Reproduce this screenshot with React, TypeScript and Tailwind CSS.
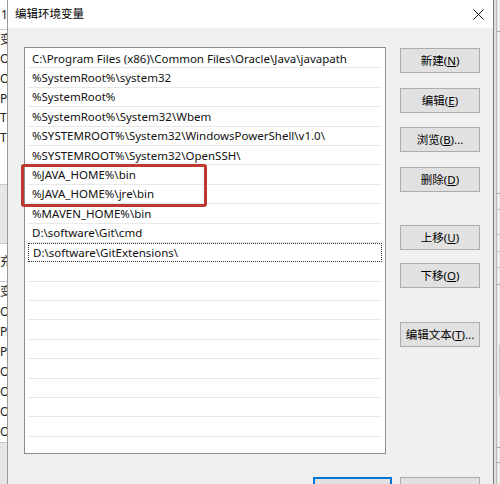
import React from 'react';

const paths = [
  'C:\\Program Files (x86)\\Common Files\\Oracle\\Java\\javapath',
  '%SystemRoot%\\system32',
  '%SystemRoot%',
  '%SystemRoot%\\System32\\Wbem',
  '%SYSTEMROOT%\\System32\\WindowsPowerShell\\v1.0\\',
  '%SYSTEMROOT%\\System32\\OpenSSH\\',
  '%JAVA_HOME%\\bin',
  '%JAVA_HOME%\\jre\\bin',
  '%MAVEN_HOME%\\bin',
  'D:\\software\\Git\\cmd',
  'D:\\software\\GitExtensions\\',
];

const font = { fontFamily: '"Segoe UI", "Noto Sans", "Noto Sans CJK SC", sans-serif' };

const WinButton = ({ label, hotkey, suffix, className = '' }: { label: string; hotkey: string; suffix?: string; className?: string }) => (
  <div className={`h-[25px] w-[80px] flex items-center justify-center bg-[#e1e1e1] border border-[#adadad] text-[11.5px] text-black ${className}`}>
    <span>
      {label}(<span className="underline">{hotkey}</span>){suffix}
    </span>
  </div>
);

// bits of the window behind the dialog
const LeftStrip = () => (
  <div className="w-[8px] h-full shrink-0 overflow-hidden bg-white border-r border-[#9a9a9a] text-[12px] text-[#222] leading-none">
    <div className="h-[30px] flex items-center border-b border-[#c8c8c8] pl-[1px]">1</div>
    <div className="flex flex-col">
      {['变', 'O', 'O', 'Pa', 'TE', 'TN'].map((t, i) => (
        <div key={i} className="h-[19.6px] flex items-center">{t}</div>
      ))}
    </div>
    <div className="h-[36px]" />
    <div className="h-[60px] bg-[#e6e6e6] border-y border-[#c8c8c8]" />
    <div className="h-[38px] flex items-center border-b border-[#c8c8c8]">充</div>
    {['变', 'O', 'Pa', 'PA', 'OF', 'OF', 'OF', 'OF'].map((t, i) => (
      <div key={i} className="h-[20px] flex items-center">{t}</div>
    ))}
    <div className="h-full bg-[#e6e6e6] border-t border-[#c8c8c8]" />
  </div>
);

const RightStrip = () => (
  <div className="w-[7px] h-full shrink-0 bg-[#ececec] border-l border-[#7a7a7a] flex">
    <div className="w-[2px] h-full bg-[#e0e0e0]" />
    <div className="flex-1 flex flex-col border-l border-[#b8b8b8]">
      <div className="h-[32px] shrink-0 border-b border-[#a8a8a8]" />
      <div className="h-[162px] shrink-0 border-b border-[#a8a8a8]" />
      <div className="h-[16px] shrink-0 border-b border-[#c0c0c0]" />
      <div className="h-[25px] shrink-0 border-b border-[#c0c0c0]" />
      <div className="h-[17px] shrink-0 border-b border-[#c0c0c0]" />
      <div className="h-[16px] shrink-0 border-b border-[#c0c0c0]" />
      <div className="h-[17px] shrink-0 border-b border-[#a8a8a8]" />
      <div className="h-[60px] shrink-0" />
      <div className="h-[50px] shrink-0 ml-[2px] bg-[#c6c6c6]" />
      <div className="h-[53px] shrink-0 border-b border-[#a8a8a8]" />
      <div className="h-[15px] shrink-0 border-b border-[#a8a8a8]" />
    </div>
  </div>
);

export default function App() {
  const rows = Array.from({ length: 21 }, (_, i) => paths[i] ?? '');
  return (
    <div className="w-[500px] h-[484px] flex overflow-hidden bg-[#f0f0f0]" style={font}>
      <LeftStrip />
      <div className="w-[485px] h-full flex flex-col shrink-0 overflow-hidden">
        <div className="h-[28px] shrink-0 bg-white flex items-center justify-between pl-[7px] pr-[9px] text-[11.5px] text-black">
          <span>编辑环境变量</span>
          <svg width="11" height="11" viewBox="0 0 11 11">
            <path d="M0.5 0.5 L10.5 10.5 M10.5 0.5 L0.5 10.5" stroke="#111" strokeWidth="1" />
          </svg>
        </div>
        <div className="shrink-0 relative pl-[16px] pr-[13px] pt-[19px]">
          <div className="flex gap-[14px]">
            <div className="w-[362px] h-[407px] shrink-0 bg-white border border-[#8c8c8c] pt-[1px] px-[3px] overflow-hidden text-[11.5px] text-[#111]">
              {rows.map((p, i) => (
                <div
                  key={i}
                  className={`h-[19.4px] flex items-center pl-[4px] whitespace-nowrap ${
                    i === 10 ? 'border border-dotted border-[#333]' : 'border-b border-[#e8e8e8]'
                  }`}
                >
                  {p}
                </div>
              ))}
            </div>
            <div className="flex flex-col pt-[1px]">
              <WinButton label="新建" hotkey="N" />
              <WinButton label="编辑" hotkey="E" className="mt-[15px]" />
              <WinButton label="浏览" hotkey="B" suffix="..." className="mt-[14px]" />
              <WinButton label="删除" hotkey="D" className="mt-[15px]" />
              <WinButton label="上移" hotkey="U" className="mt-[33px]" />
              <WinButton label="下移" hotkey="O" className="mt-[13px]" />
              <WinButton label="编辑文本" hotkey="T" suffix="..." className="mt-[34px]" />
            </div>
          </div>
          <div className="flex justify-end gap-[8px] mt-[23px]">
            <div className="h-[25px] w-[79px] bg-[#e1e1e1] border-2 border-[#0078d7]" />
            <div className="h-[25px] w-[80px] bg-[#e1e1e1] border border-[#adadad]" />
          </div>
          {/* red annotation around the JAVA_HOME rows */}
          <div className="absolute left-[13px] top-[136px] w-[186px] h-[43px] border-[3px] border-[#bf3731] rounded-[3px]" />
        </div>
      </div>
      <RightStrip />
    </div>
  );
}
